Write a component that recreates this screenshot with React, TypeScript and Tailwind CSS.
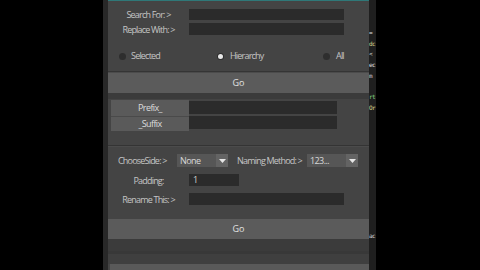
import React from "react";

const font = { fontFamily: '"Open Sans", "Noto Sans", sans-serif' };

function Label({ children }: { children: React.ReactNode }) {
  return (
    <div className="w-[81px] flex-none text-center text-[9px] leading-none tracking-[-0.8px] text-[#c4c4c4]">
      {children}
    </div>
  );
}

function Field({ w, h = "h-[12px]", children }: { w: string; h?: string; children?: React.ReactNode }) {
  return (
    <div className={`${w} ${h} flex-none bg-[#2b2b2b] flex items-center pl-[4px] text-[9px] text-[#d0d0d0]`}>
      {children}
    </div>
  );
}

function Radio({ on }: { on?: boolean }) {
  return (
    <div className="w-[7px] h-[7px] flex-none rounded-full bg-[#2e2e2e] flex items-center justify-center">
      {on && <div className="w-[5px] h-[5px] rounded-full bg-[#e8e8e8]" />}
    </div>
  );
}

function Dropdown({ text }: { text: string }) {
  return (
    <div className="w-[51px] h-[13px] flex-none flex bg-[#565656]">
      <div className="flex-1 flex items-center pl-[3px] text-[9px] tracking-[-0.6px] text-[#d8d8d8]">{text}</div>
      <div className="w-[12px] bg-[#636363] flex items-center justify-center">
        <svg width="7" height="4" viewBox="0 0 7 4">
          <path d="M0 0 L7 0 L3.5 4 Z" fill="#e6e6e6" />
        </svg>
      </div>
    </div>
  );
}

const codeLines: { t: string; c: string }[] = [
  { t: "=", c: "#e0e0e0" },
  { t: "dc", c: "#d8d88a" },
  { t: "<", c: "#e0e0e0" },
  { t: "ec", c: "#e0e0e0" },
  { t: "m", c: "#cfcfcf" },
  { t: "", c: "" },
  { t: "rt", c: "#7fd07f" },
  { t: "Or", c: "#d8d88a" },
  ...Array.from({ length: 11 }, () => ({ t: "", c: "" })),
  { t: "ac", c: "#d8d8d8" },
];

export default function App() {
  return (
    <div className="w-[480px] h-[270px] bg-black flex overflow-hidden" style={font}>
      <div className="w-[103px] flex-none bg-black" />
      <div className="w-[5px] flex-none bg-[#282828]" />
      <div className="w-[261px] flex-none bg-[#444444] flex flex-col border-t border-[#2f7878]">
        {/* search / replace */}
        <div className="flex items-center mt-[7px] h-[12px]">
          <Label>Search For: &gt;</Label>
          <Field w="w-[155px]" h="h-[11px]" />
        </div>
        <div className="flex items-center mt-[3px] h-[12px]">
          <Label>Replace With: &gt;</Label>
          <Field w="w-[155px]" />
        </div>
        {/* radios */}
        <div className="flex items-center mt-[15px] h-[12px] text-[9px] tracking-[-0.8px] text-[#c4c4c4]">
          <div className="ml-[11px] w-[98px] flex-none flex items-center gap-[5px]">
            <Radio />
            <span>Selected</span>
          </div>
          <div className="w-[106px] flex-none flex items-center gap-[6px]">
            <Radio on />
            <span>Hierarchy</span>
          </div>
          <div className="flex items-center gap-[6px]">
            <Radio />
            <span>All</span>
          </div>
        </div>
        <div className="mt-[9px] h-[1px] bg-[#353535]" />
        <div className="h-[1px] bg-[#4c4c4c]" />
        <div className="h-[20px] bg-[#5b5b5b] flex items-center justify-center text-[9px] text-[#e2e2e2]">Go</div>
        <div className="h-[6px] bg-[#3b3b3b]" />
        {/* prefix / suffix */}
        <div className="flex mt-[1px] ml-[3px]">
          <div className="w-[78px] flex-none flex flex-col">
            <div className="h-[16px] bg-[#5a5a5a] flex items-center justify-center text-[9px] tracking-[-0.6px] text-[#dcdcdc]">Prefix_</div>
            <div className="h-[15px] bg-[#5a5a5a] flex items-center justify-center text-[9px] tracking-[-0.6px] text-[#dcdcdc] border-t border-[#4a4a4a]">_Suffix</div>
          </div>
          <div className="flex flex-col pt-[1px] gap-[2px]">
            <Field w="w-[148px]" h="h-[13px]" />
            <Field w="w-[148px]" h="h-[13px]" />
          </div>
        </div>
        <div className="mt-[14px] h-[1px] bg-[#343434]" />
        <div className="h-[1px] bg-[#4b4b4b]" />
        {/* choose side */}
        <div className="flex items-center mt-[7px] h-[13px] text-[9px] tracking-[-0.8px] text-[#c4c4c4]">
          <div className="ml-[10px] w-[59px] flex-none">ChooseSide: &gt;</div>
          <Dropdown text="None" />
          <div className="ml-[9px] w-[70px] flex-none">Naming Method: &gt;</div>
          <Dropdown text="123..." />
        </div>
        <div className="flex items-center mt-[7px] h-[12px]">
          <Label>Padding:</Label>
          <Field w="w-[50px]">1</Field>
        </div>
        <div className="flex items-center mt-[7px] h-[12px]">
          <Label>Rename This: &gt;</Label>
          <Field w="w-[155px]" />
        </div>
        <div className="mt-[14px] h-[20px] bg-[#5b5b5b] flex items-center justify-center text-[9px] text-[#e2e2e2]">Go</div>
        <div className="h-[12px] bg-[#3b3b3b]" />
        <div className="h-[3px] bg-[#383838]" />
        <div className="h-[10px] bg-[#3f3f3f]" />
        <div className="flex-1 bg-[#595959] ml-[2px]" />
      </div>
      <div className="w-[7px] flex-none bg-[#1f1f1f] overflow-hidden pt-[28px]">
        {codeLines.map((l, i) => (
          <div
            key={i}
            className="h-[10.7px] leading-[10.7px] text-[6px] tracking-[-0.5px] whitespace-nowrap"
            style={{ color: l.c || undefined, fontFamily: '"DejaVu Sans Mono", monospace' }}
          >
            {l.t}
          </div>
        ))}
      </div>
      <div className="flex-1 bg-black" />
    </div>
  );
}
